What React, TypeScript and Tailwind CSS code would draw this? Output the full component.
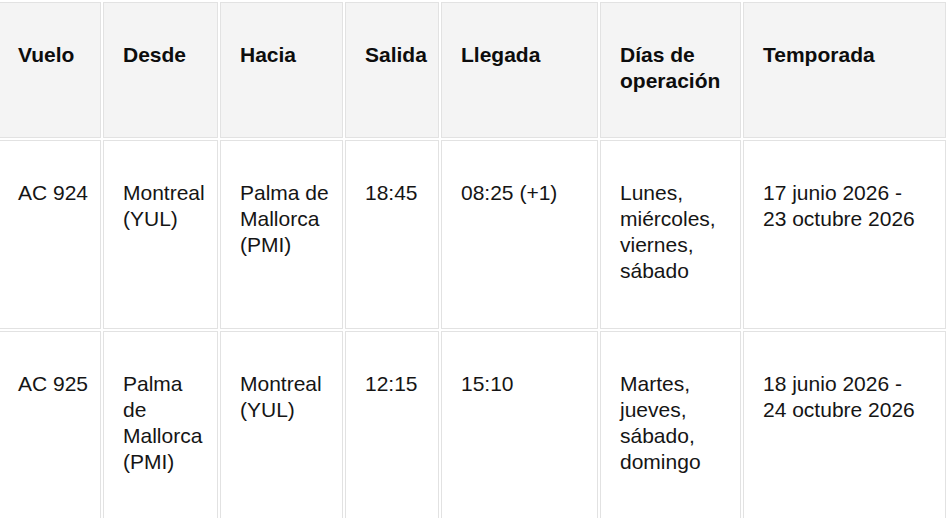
import React from "react";

const headers: string[][] = [
  ["Vuelo"],
  ["Desde"],
  ["Hacia"],
  ["Salida"],
  ["Llegada"],
  ["Días de", "operación"],
  ["Temporada"],
];

const rows: string[][][] = [
  [
    ["AC 924"],
    ["Montreal", "(YUL)"],
    ["Palma de", "Mallorca", "(PMI)"],
    ["18:45"],
    ["08:25 (+1)"],
    ["Lunes,", "miércoles,", "viernes,", "sábado"],
    ["17 junio 2026 -", "23 octubre 2026"],
  ],
  [
    ["AC 925"],
    ["Palma", "de", "Mallorca", "(PMI)"],
    ["Montreal", "(YUL)"],
    ["12:15"],
    ["15:10"],
    ["Martes,", "jueves,", "sábado,", "domingo"],
    ["18 junio 2026 -", "24 octubre 2026"],
  ],
];

function Lines({ lines }: { lines: string[] }) {
  return (
    <>
      {lines.map((l, i) => (
        <div key={i} className="whitespace-nowrap">
          {l}
        </div>
      ))}
    </>
  );
}

export default function App() {
  return (
    <div
      className="h-[518px] w-[950px] overflow-hidden bg-white"
      style={{ fontFamily: '"Liberation Sans", Arial, Helvetica, sans-serif' }}
    >
      <div className="-ml-[4px] grid w-max grid-cols-[103px_115px_123px_94px_157px_141px_203px] grid-rows-[136px_189px_189px] gap-[2px] p-[2px] text-[21px] leading-[26px]">
        {headers.map((h, i) => (
          <div
            key={`h${i}`}
            className="border border-[#e2e2e2] bg-[#f4f4f4] pl-[19px] pt-[39px] font-bold text-[#0d0d0d]"
          >
            <Lines lines={h} />
          </div>
        ))}
        {rows.map((r, ri) =>
          r.map((c, ci) => (
            <div
              key={`r${ri}c${ci}`}
              className="border border-[#e2e2e2] bg-white pl-[19px] pt-[39px] text-[#151515]"
            >
              <Lines lines={c} />
            </div>
          ))
        )}
      </div>
    </div>
  );
}
